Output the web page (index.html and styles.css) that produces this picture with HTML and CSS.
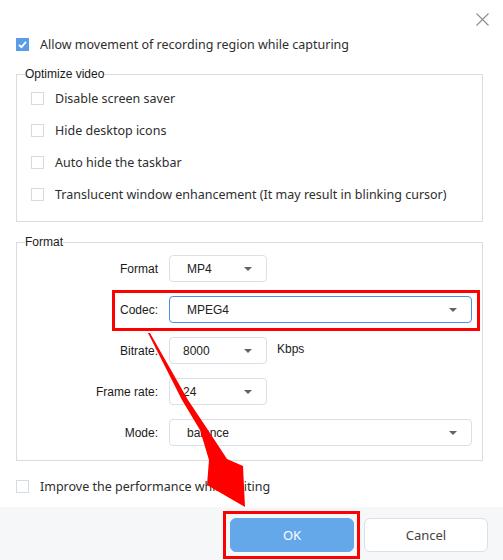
FILE: index.html
```html
<!DOCTYPE html>
<html>
<head>
<meta charset="utf-8">
<link rel="stylesheet" href="styles.css">
</head>
<body>
<div class="dialog">
  <div class="titlebar">
    <span class="close">
      <svg width="13" height="13" viewBox="0 0 13 13"><path d="M0.5 0.5L12.5 12.5M12.5 0.5L0.5 12.5" stroke="#8a8d92" stroke-width="1.1" fill="none"/></svg>
    </span>
  </div>

  <div class="check-row top-check">
    <span class="box checked"><svg width="13" height="13" viewBox="0 0 13 13"><path d="M3 6.8L5.4 9.2L10 3.8" stroke="#fff" stroke-width="1.8" fill="none"/></svg></span>
    <span class="check-text">Allow movement of recording region while capturing</span>
  </div>

  <fieldset class="group optimize">
    <legend>Optimize video</legend>
    <div class="check-row inner"><span class="box"></span><span class="check-text">Disable screen saver</span></div>
    <div class="check-row inner"><span class="box"></span><span class="check-text">Hide desktop icons</span></div>
    <div class="check-row inner"><span class="box"></span><span class="check-text">Auto hide the taskbar</span></div>
    <div class="check-row inner"><span class="box"></span><span class="check-text">Translucent window enhancement (It may result in blinking cursor)</span></div>
  </fieldset>

  <fieldset class="group format">
    <legend>Format</legend>
    <div class="fields">
      <div class="field">
        <span class="label">Format</span>
        <div class="control"><div class="select small"><span>MP4</span><i class="caret"></i></div></div>
      </div>
      <div class="field highlight">
        <span class="label">Codec:</span>
        <div class="control"><div class="select wide focus"><span>MPEG4</span><i class="caret"></i></div></div>
      </div>
      <div class="field">
        <span class="label">Bitrate:</span>
        <div class="control"><div class="select small tight"><span>8000</span><i class="caret"></i></div><span class="unit">Kbps</span></div>
      </div>
      <div class="field">
        <span class="label">Frame rate:</span>
        <div class="control"><div class="select small tight"><span>24</span><i class="caret"></i></div></div>
      </div>
      <div class="field">
        <span class="label">Mode:</span>
        <div class="control"><div class="select wide"><span>balance</span><i class="caret"></i></div></div>
      </div>
    </div>
  </fieldset>

  <div class="check-row bottom-check">
    <span class="box"></span>
    <span class="check-text">Improve the performance while editing</span>
  </div>

  <div class="footer">
    <div class="ok-wrap"><button class="btn primary">OK</button></div>
    <button class="btn">Cancel</button>
  </div>

  <svg class="arrow" width="503" height="560" viewBox="0 0 503 560">
    <polygon fill="#ff0000" points="148,333 150,333 188,400 208,430 227,459 243,466 245,507 207,485 209,460 200,430 182,400"/>
  </svg>
</div>
</body>
</html>
```

FILE: styles.css
```css
* { box-sizing: border-box; }
html, body { margin: 0; padding: 0; background: #fff; }
.dialog {
  position: relative;
  width: 503px;
  height: 560px;
  overflow: hidden;
  background: #fff;
  font-family: "Noto Sans", sans-serif;
  color: #333;
}
.titlebar {
  height: 32px;
  padding: 13px 14px 0 0;
  display: flex;
  justify-content: flex-end;
}
.close { display: block; width: 13px; height: 13px; }
.close svg { display: block; }

.check-row {
  display: flex;
  align-items: center;
  height: 24px;
}
.check-text {
  font-size: 12.5px;
  color: #2e2e2e;
  white-space: nowrap;
}
.box {
  width: 13px;
  height: 13px;
  border: 1px solid #d5dbe3;
  background: #fff;
  flex: none;
}
.box.checked {
  border: none;
  background: #5a9de6;
}
.box svg { display: block; }
.top-check { padding-left: 16px; }
.top-check .box, .bottom-check .box { margin-right: 11px; }

.group {
  margin: 10px 20px 0 16px;
  padding: 0;
  border: 1px solid #dcdcdc;
  min-width: 0;
}
.group legend {
  margin-left: 8px;
  padding: 0;
  font-family: "Liberation Sans", Arial, sans-serif;
  font-size: 12px;
  line-height: 16px;
  color: #1a1a1a;
}
.optimize { padding-bottom: 11px; }
.check-row.inner { height: 32px; padding-left: 14px; }
.check-row.inner .box { margin-right: 11px; }

.format { margin-top: 12px; padding: 5px 10px 14px 0; }
.fields {
  display: flex;
  flex-direction: column;
  gap: 14px;
}
.field {
  position: relative;
  display: grid;
  grid-template-columns: 141px 1fr;
  column-gap: 11px;
  align-items: center;
  height: 27px;
  font-family: "Liberation Sans", Arial, sans-serif;
  font-size: 12px;
  color: #1a1a1a;
}
.field.highlight::after {
  content: "";
  position: absolute;
  left: 95px;
  right: -8px;
  top: -6px;
  bottom: -8px;
  border: 3px solid #ff0000;
}
.label { text-align: right; }
.control {
  display: flex;
  align-items: center;
  gap: 10px;
}
.select {
  height: 27px;
  display: flex;
  align-items: center;
  justify-content: space-between;
  border: 1px solid #dcdfe6;
  border-radius: 4px;
  background: #fff;
  padding: 0 14px 0 17px;
  color: #222;
}
.select.small { width: 98px; }
.select.tight { padding-left: 13px; }
.select.wide { flex: 1; }
.select.focus { border-color: #4a90e2; }
.caret {
  width: 0;
  height: 0;
  border-left: 4px solid transparent;
  border-right: 4px solid transparent;
  border-top: 4px solid #5f636a;
}
.unit { margin-top: -3px; }

.bottom-check { padding-left: 16px; margin-top: 13px; }

.footer {
  position: absolute;
  left: 0;
  right: 0;
  bottom: 0;
  height: 53px;
  background: #f6f7f8;
  display: flex;
  justify-content: flex-end;
  align-items: flex-start;
  gap: 10px;
  padding: 11px 15px 0 0;
}
.ok-wrap { position: relative; }
.ok-wrap::after {
  content: "";
  position: absolute;
  left: -7px;
  right: -6px;
  top: -7px;
  bottom: -7px;
  border: 3px solid #ff0000;
}
.btn {
  display: block;
  width: 124px;
  height: 34px;
  border-radius: 6px;
  border: 1px solid #dcdfe6;
  background: #fff;
  font-family: "Noto Sans", sans-serif;
  font-size: 13px;
  color: #444;
  padding: 0;
}
.btn.primary {
  background: #64a8ea;
  border-color: #64a8ea;
  color: #fff;
}
.arrow {
  position: absolute;
  left: 0;
  top: 0;
  pointer-events: none;
}
```
